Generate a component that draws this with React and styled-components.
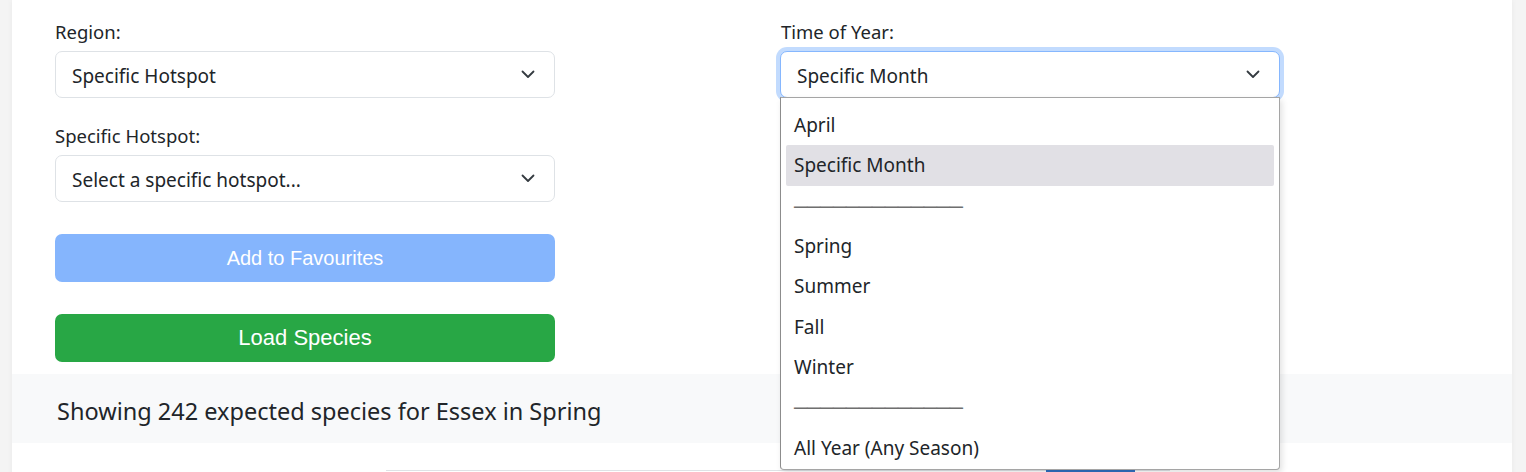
import React from "react";
import styled, { createGlobalStyle } from "styled-components";

const GlobalStyle = createGlobalStyle`
  html, body {
    margin: 0;
    padding: 0;
    background: #f4f4f4;
  }
  body {
    font-family: "Noto Sans", "Open Sans", sans-serif;
    color: #212529;
  }
  * {
    box-sizing: border-box;
  }
`;

const Page = styled.div`
  width: 1500px;
  min-height: 100vh;
  margin: 0 12px;
  background: #fff;
  box-shadow: 0 0 6px rgba(0, 0, 0, 0.05);
  overflow: hidden;
`;

const FormGrid = styled.div`
  display: grid;
  grid-template-columns: 500px 500px;
  column-gap: 225px;
  padding: 20px 43px 12px;
`;

const Column = styled.div`
  display: flex;
  flex-direction: column;
`;

const Field = styled.div`
  position: relative;
  display: flex;
  flex-direction: column;
  gap: 8px;
  & + & {
    margin-top: 26px;
  }
`;

const Label = styled.label`
  font-size: 18.5px;
  line-height: 23px;
  padding-left: ${(p) => (p.$nudge ? "1px" : "0")};
`;

const Select = styled.div`
  position: relative;
  display: flex;
  align-items: center;
  justify-content: space-between;
  height: 47px;
  padding: 2px 19px 0 16px;
  font-size: 19px;
  background: #fff;
  border: 1px solid ${(p) => (p.$focused ? "#86b7fe" : "#dee2e6")};
  border-radius: 7px;
  box-shadow: ${(p) =>
    p.$focused ? "0 0 0 4px rgba(13, 110, 253, 0.25)" : "none"};
  & svg {
    flex: none;
    margin-top: -2px;
  }
`;

const Button = styled.button`
  height: 48px;
  width: 100%;
  border: none;
  border-radius: 7px;
  color: #fff;
  font-family: "Liberation Sans", Arial, sans-serif;
  font-size: ${(p) => p.$size};
  background: ${(p) => p.$bg};
`;

const ButtonStack = styled.div`
  display: flex;
  flex-direction: column;
  gap: 32px;
  margin-top: 32px;
`;

const Dropdown = styled.ul`
  position: absolute;
  top: 77px;
  left: 0;
  width: 500px;
  height: 373px;
  margin: 0;
  padding: 7px 5px 0;
  list-style: none;
  background: #fff;
  border: 1px solid #a5a5a5;
  border-left-color: #8c8c8c;
  border-radius: 0 0 4px 4px;
  box-shadow: 2px 3px 6px rgba(0, 0, 0, 0.12);
  z-index: 5;
`;

const Option = styled.li`
  display: flex;
  align-items: center;
  height: 40.3px;
  padding-left: 8px;
  font-size: 19px;
  border-radius: 2px;
  background: ${(p) => (p.$active ? "#e1e0e5" : "transparent")};
  color: ${(p) => (p.$divider ? "#6f6f6f" : "#212529")};
  letter-spacing: ${(p) => (p.$divider ? "-0.5px" : "0")};
`;

const Summary = styled.div`
  display: flex;
  align-items: center;
  height: 69px;
  padding: 4px 45px 0;
  background: #f8f9fa;
  font-size: 23.5px;
`;

const BottomRow = styled.div`
  display: flex;
  justify-content: flex-end;
  width: 784px;
  margin: 27px 0 0 374px;
  padding-right: 35px;
  border-top: 1px solid #dee2e6;
`;

const Tab = styled.div`
  width: 89px;
  height: 30px;
  margin-top: -1px;
  border-top: 2px solid #2f6fbf;
`;

const Chevron = () => (
  <svg width="14" height="9" viewBox="0 0 14 9" fill="none">
    <path
      d="M1.5 1.5 7 7l5.5-5.5"
      stroke="#343a40"
      strokeWidth="1.8"
      strokeLinecap="round"
      strokeLinejoin="round"
    />
  </svg>
);

const monthOptions = [
  { label: "April" },
  { label: "Specific Month", active: true },
  { label: "─────────────", divider: true },
  { label: "Spring" },
  { label: "Summer" },
  { label: "Fall" },
  { label: "Winter" },
  { label: "─────────────", divider: true },
  { label: "All Year (Any Season)" },
];

export default function App() {
  return (
    <>
      <GlobalStyle />
      <Page>
        <FormGrid>
          <Column>
            <Field>
              <Label>Region:</Label>
              <Select>
                <span>Specific Hotspot</span>
                <Chevron />
              </Select>
            </Field>
            <Field>
              <Label>Specific Hotspot:</Label>
              <Select>
                <span>Select a specific hotspot...</span>
                <Chevron />
              </Select>
            </Field>
            <ButtonStack>
              <Button disabled $bg="#85b5fd" $size="20px">
                Add to Favourites
              </Button>
              <Button $bg="#28a745" $size="22px">
                Load Species
              </Button>
            </ButtonStack>
          </Column>
          <Column>
            <Field>
              <Label $nudge>Time of Year:</Label>
              <Select $focused>
                <span>Specific Month</span>
                <Chevron />
              </Select>
              <Dropdown>
                {monthOptions.map((o, i) => (
                  <Option key={i} $active={o.active} $divider={o.divider}>
                    {o.label}
                  </Option>
                ))}
              </Dropdown>
            </Field>
          </Column>
        </FormGrid>
        <Summary>Showing 242 expected species for Essex in Spring</Summary>
        <BottomRow>
          <Tab />
        </BottomRow>
      </Page>
    </>
  );
}
